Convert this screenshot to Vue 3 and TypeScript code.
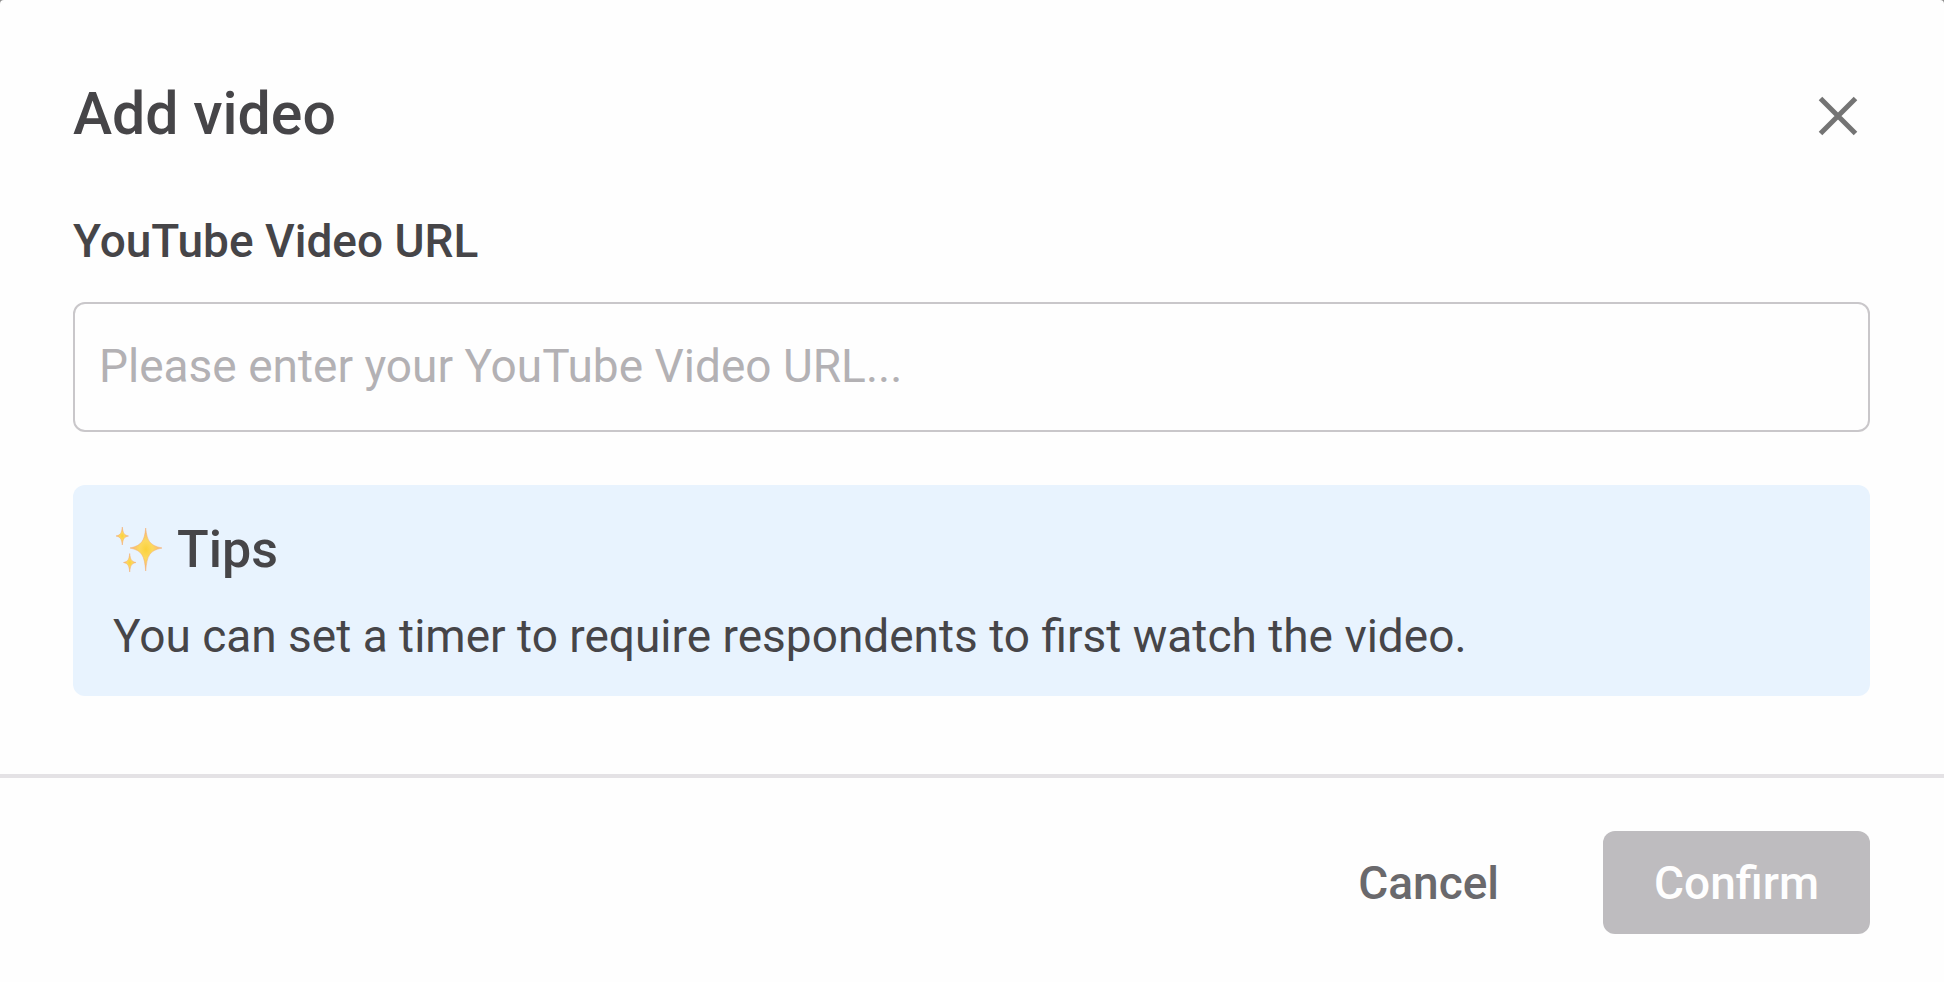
<script setup lang="ts">
import { ref } from 'vue'

const url = ref('')
</script>

<template>
  <div class="backdrop">
    <section class="dialog" role="dialog" aria-labelledby="dialog-title">
      <form class="form" @submit.prevent>
        <div class="content">
          <header class="header">
            <h1 id="dialog-title" class="title">Add video</h1>
            <button class="close" type="button" aria-label="Close">
              <svg viewBox="0 0 40 40" aria-hidden="true">
                <path d="M2.500 2.500 37.500 37.500M37.500 2.500 2.500 37.500" />
              </svg>
            </button>
          </header>
          <label class="label" for="video-url">YouTube Video URL</label>
          <input
            id="video-url"
            v-model="url"
            class="field"
            type="text"
            placeholder="Please enter your YouTube Video URL..."
          />
          <aside class="tips">
            <h2 class="tips-title">
              <svg class="sparkles" viewBox="0 0 52 52" aria-hidden="true">
                <defs>
                  <radialGradient id="spark">
                    <stop offset="0" stop-color="#fbd13a" />
                    <stop offset="0.4" stop-color="#fcd95e" />
                    <stop offset="1" stop-color="#f6b27c" />
                  </radialGradient>
                </defs>
                <g fill="url(#spark)" stroke="#f5ad6c" stroke-width="0.5">
                  <path d="M32.700 4C34 16.500 36.500 21.500 49 24C36.500 26.500 34 31.500 32.700 47C31.400 31.500 29 26.500 17 24C29 21.500 31.400 16.500 32.700 4Z" />
                  <path d="M9.300 3C10 9 11 11 15.500 12C11 13 10 15 9.300 21C8.600 15 7.500 13 3 12C7.500 11 8.600 9 9.300 3Z" />
                  <path d="M16.700 29.500C17.400 35.500 18.400 37.500 23 38.500C18.400 39.500 17.400 41.500 16.700 48C16 41.500 15 39.500 10.500 38.500C15 37.500 16 35.500 16.700 29.500Z" />
                </g>
              </svg>
              <span>Tips</span>
            </h2>
            <p class="tips-text">You can set a timer to require respondents to first watch the video.</p>
          </aside>
        </div>
        <footer class="footer">
          <button class="button cancel" type="button">Cancel</button>
          <button class="button confirm" type="submit" :disabled="!url">Confirm</button>
        </footer>
      </form>
    </section>
  </div>
</template>

<style>
body {
  margin: 0;
  background: #8c8c8c;
}
</style>

<style scoped>
.backdrop {
  font-family: Roboto, "Liberation Sans", sans-serif;
  color: #464548;
}

.dialog {
  min-height: 100vh;
  background: #fefefe;
  border-radius: 4px 4px 0 0;
}

.content {
  padding: 80px 74px 78px 73px;
}

.header {
  display: flex;
  align-items: flex-end;
  justify-content: space-between;
  padding-right: 12px;
}

.title {
  margin: 0;
  font-size: 59px;
  line-height: 68px;
  font-weight: 500;
}

.close {
  display: flex;
  margin-bottom: 12px;
  padding: 0;
  border: 0;
  background: none;
}

.close svg {
  width: 40px;
  height: 40px;
  fill: none;
  stroke: #747474;
  stroke-width: 5;
}

.label {
  display: block;
  margin: 65px 0 33px;
  font-size: 46px;
  line-height: 56px;
  font-weight: 500;
}

.field {
  display: block;
  box-sizing: border-box;
  width: 100%;
  height: 130px;
  padding: 0 24px 2px;
  border: 2px solid #c9c7ca;
  border-radius: 12px;
  background: #fefefe;
  font: inherit;
  font-size: 46px;
  color: inherit;
}

.field::placeholder {
  color: #b3b1b4;
  opacity: 1;
}

.tips {
  margin-top: 53px;
  padding: 33px 40px 32px;
  border-radius: 12px;
  background: #e8f3fe;
}

.tips-title {
  display: flex;
  align-items: center;
  gap: 12px;
  margin: 0;
  font-size: 52px;
  line-height: 64px;
  font-weight: 500;
}

.sparkles {
  width: 52px;
  height: 52px;
}

.tips-text {
  margin: 26px 0 0;
  font-size: 46px;
  line-height: 56px;
}

.footer {
  display: flex;
  justify-content: flex-end;
  gap: 53px;
  padding: 53px 74px 48px;
  border-top: 4px solid #e4e2e5;
}

.button {
  height: 103px;
  padding: 0 51px;
  border: 0;
  border-radius: 12px;
  font: inherit;
  font-size: 46px;
  font-weight: 500;
}

.cancel {
  background: none;
  color: #6a696c;
}

.confirm {
  background: #bebcbf;
  color: #fefefe;
}
</style>
